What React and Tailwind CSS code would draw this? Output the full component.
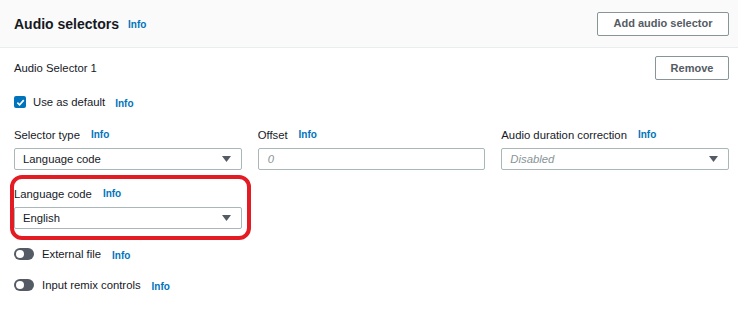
import React from "react";

const font = { fontFamily: '"Liberation Sans", Arial, sans-serif' };

const Info = () => (
  <span className="text-[10px] font-bold text-[#0073bb] leading-[14px]">Info</span>
);

const Caret = () => (
  <svg width="9" height="6" viewBox="0 0 9 6" className="shrink-0">
    <path d="M0 0 H9 L4.5 6 Z" fill="#545b64" />
  </svg>
);

const Label = ({ children }) => (
  <div className="flex items-center gap-[11px] h-[14px]">
    <span className="text-[11.3px] leading-[14px] text-[#16191f]">{children}</span>
    <Info />
  </div>
);

const Select = ({ value, placeholder }) => (
  <div className="mt-[6px] h-[22px] border border-[#aab7b8] rounded-[2px] bg-white flex items-center justify-between pl-[8px] pr-[10px]">
    {value ? (
      <span className="text-[11.3px] text-[#16191f]">{value}</span>
    ) : (
      <span className="text-[11.3px] italic text-[#879596]">{placeholder}</span>
    )}
    <Caret />
  </div>
);

const Toggle = ({ label }) => (
  <div className="flex items-center h-[14px]">
    <div className="w-[20px] h-[12px] rounded-full bg-[#545b64] flex items-center pl-[2px]">
      <div className="w-[8px] h-[8px] rounded-full bg-white" />
    </div>
    <span className="ml-[8px] text-[11.3px] leading-[14px] text-[#16191f]">{label}</span>
    <span className="ml-[11px]">
      <Info />
    </span>
  </div>
);

export default function App() {
  return (
    <div className="w-[738px] h-[317px] bg-white overflow-hidden" style={font}>
      {/* header */}
      <div className="h-[48px] bg-[#fafafa] border-b border-[#eaeded] flex items-center justify-between pl-[14px] pr-[9px]">
        <div className="flex items-center gap-[9px] pt-[2px]">
          <h2 className="text-[14px] font-bold text-[#16191f]">Audio selectors</h2>
          <Info />
        </div>
        <button className="h-[24px] w-[132px] border border-[#879596] rounded-[2px] bg-white text-[11px] font-bold text-[#545b64]">
          Add audio selector
        </button>
      </div>

      {/* body */}
      <div className="pl-[14px] pr-[9px]">
        <div className="mt-[8px] flex items-center justify-between h-[24px]">
          <span className="text-[11.3px] text-[#16191f]">Audio Selector 1</span>
          <button className="h-[24px] w-[74px] border border-[#879596] rounded-[2px] bg-white text-[11px] font-bold text-[#545b64]">
            Remove
          </button>
        </div>

        <div className="mt-[15px] flex items-center h-[14px]">
          <div className="w-[12px] h-[12px] rounded-[2px] bg-[#0073bb] flex items-center justify-center">
            <svg width="9" height="9" viewBox="0 0 10 10">
              <path d="M1.5 5.2 L4 7.6 L8.6 2.4" stroke="white" strokeWidth="1.8" fill="none" />
            </svg>
          </div>
          <span className="ml-[7px] text-[11.3px] leading-[14px] text-[#16191f]">Use as default</span>
          <span className="ml-[10px]">
            <Info />
          </span>
        </div>

        <div className="mt-[19px] grid grid-cols-3 gap-x-4">
          <div>
            <Label>Selector type</Label>
            <Select value="Language code" />
          </div>
          <div>
            <Label>Offset</Label>
            <div className="mt-[6px] h-[22px] border border-[#aab7b8] rounded-[2px] bg-white flex items-center pl-[9px]">
              <span className="text-[11.3px] italic text-[#879596]">0</span>
            </div>
          </div>
          <div>
            <Label>Audio duration correction</Label>
            <Select placeholder="Disabled" />
          </div>
        </div>

        <div className="mt-[17px] grid grid-cols-3 gap-x-4">
          <div className="relative">
            <Label>Language code</Label>
            <Select value="English" />
            <div className="absolute -left-[4px] -right-[9px] -top-[12px] -bottom-[11px] border-[4px] border-[#e31b23] rounded-[12px] pointer-events-none" />
          </div>
        </div>

        <div className="mt-[18px]">
          <Toggle label="External file" />
        </div>
        <div className="mt-[17px]">
          <Toggle label="Input remix controls" />
        </div>
      </div>
    </div>
  );
}
